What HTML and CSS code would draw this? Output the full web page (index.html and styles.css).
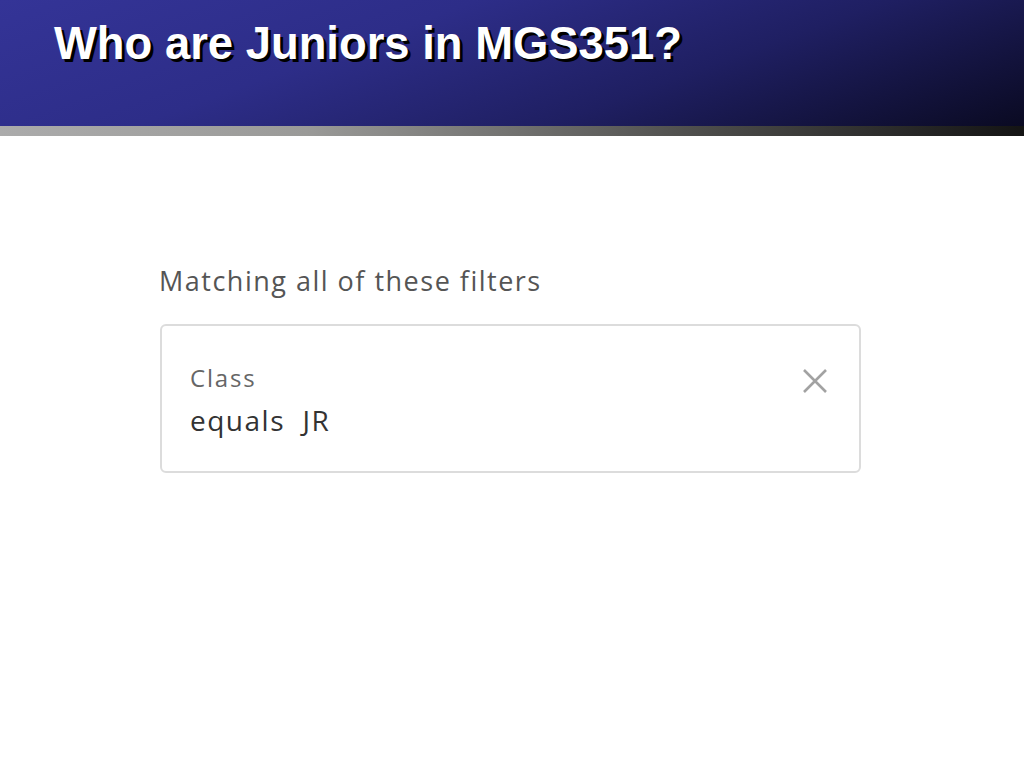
FILE: index.html
```html
<!DOCTYPE html>
<html>
<head>
<meta charset="utf-8">
<link rel="stylesheet" href="styles.css">
</head>
<body>
<header class="banner">
  <h1 class="title">Who are Juniors in MGS351?</h1>
</header>
<div class="rule"></div>
<main class="content">
  <div class="heading">Matching all of these filters</div>
  <div class="filter">
    <div class="filter-text">
      <div class="field">Class</div>
      <div class="value">equals&nbsp; JR</div>
    </div>
    <svg class="close" width="26" height="26" viewBox="0 0 26 26">
      <path d="M2 2 L24 24 M24 2 L2 24" stroke="#a2a2a2" stroke-width="2.6" fill="none"/>
    </svg>
  </div>
</main>
</body>
</html>
```
FILE: styles.css
```css
html, body {
  margin: 0;
  padding: 0;
  background: #ffffff;
}
body {
  width: 1024px;
  height: 768px;
  overflow: hidden;
}
.banner {
  height: 126px;
  background: linear-gradient(160deg, #343497 0%, #2d2d88 35%, #1f1f62 65%, #0a0a22 100%);
  box-sizing: border-box;
  padding: 18px 0 0 54px;
}
.title {
  margin: 0;
  font-family: "Liberation Sans", Arial, sans-serif;
  font-weight: bold;
  font-size: 45.4px;
  line-height: 52px;
  color: #ffffff;
  text-shadow: 3px 3px 0 #000000;
}
.rule {
  height: 10px;
  background: linear-gradient(90deg, #ababab 0%, #9a9a98 30%, #4a4a48 70%, #141414 100%);
}
.content {
  padding: 126px 0 0 160px;
}
.heading {
  font-family: "Open Sans", sans-serif;
  font-size: 27px;
  line-height: 38px;
  letter-spacing: 1.5px;
  color: #555555;
  margin-left: -1px;
}
.filter {
  margin-top: 24px;
  width: 701px;
  height: 149px;
  box-sizing: border-box;
  border: 2px solid #dcdcdc;
  border-radius: 6px;
  display: flex;
  justify-content: space-between;
  align-items: flex-start;
  padding: 36px 31px 0 28px;
}
.field {
  font-family: "Open Sans", sans-serif;
  font-size: 24px;
  line-height: 32px;
  letter-spacing: 1.8px;
  color: #666666;
}
.value {
  font-family: "Open Sans", sans-serif;
  font-size: 28px;
  line-height: 40px;
  letter-spacing: 1.5px;
  color: #333333;
  margin-top: 6px;
}
.close {
  margin-top: 6px;
}
```
